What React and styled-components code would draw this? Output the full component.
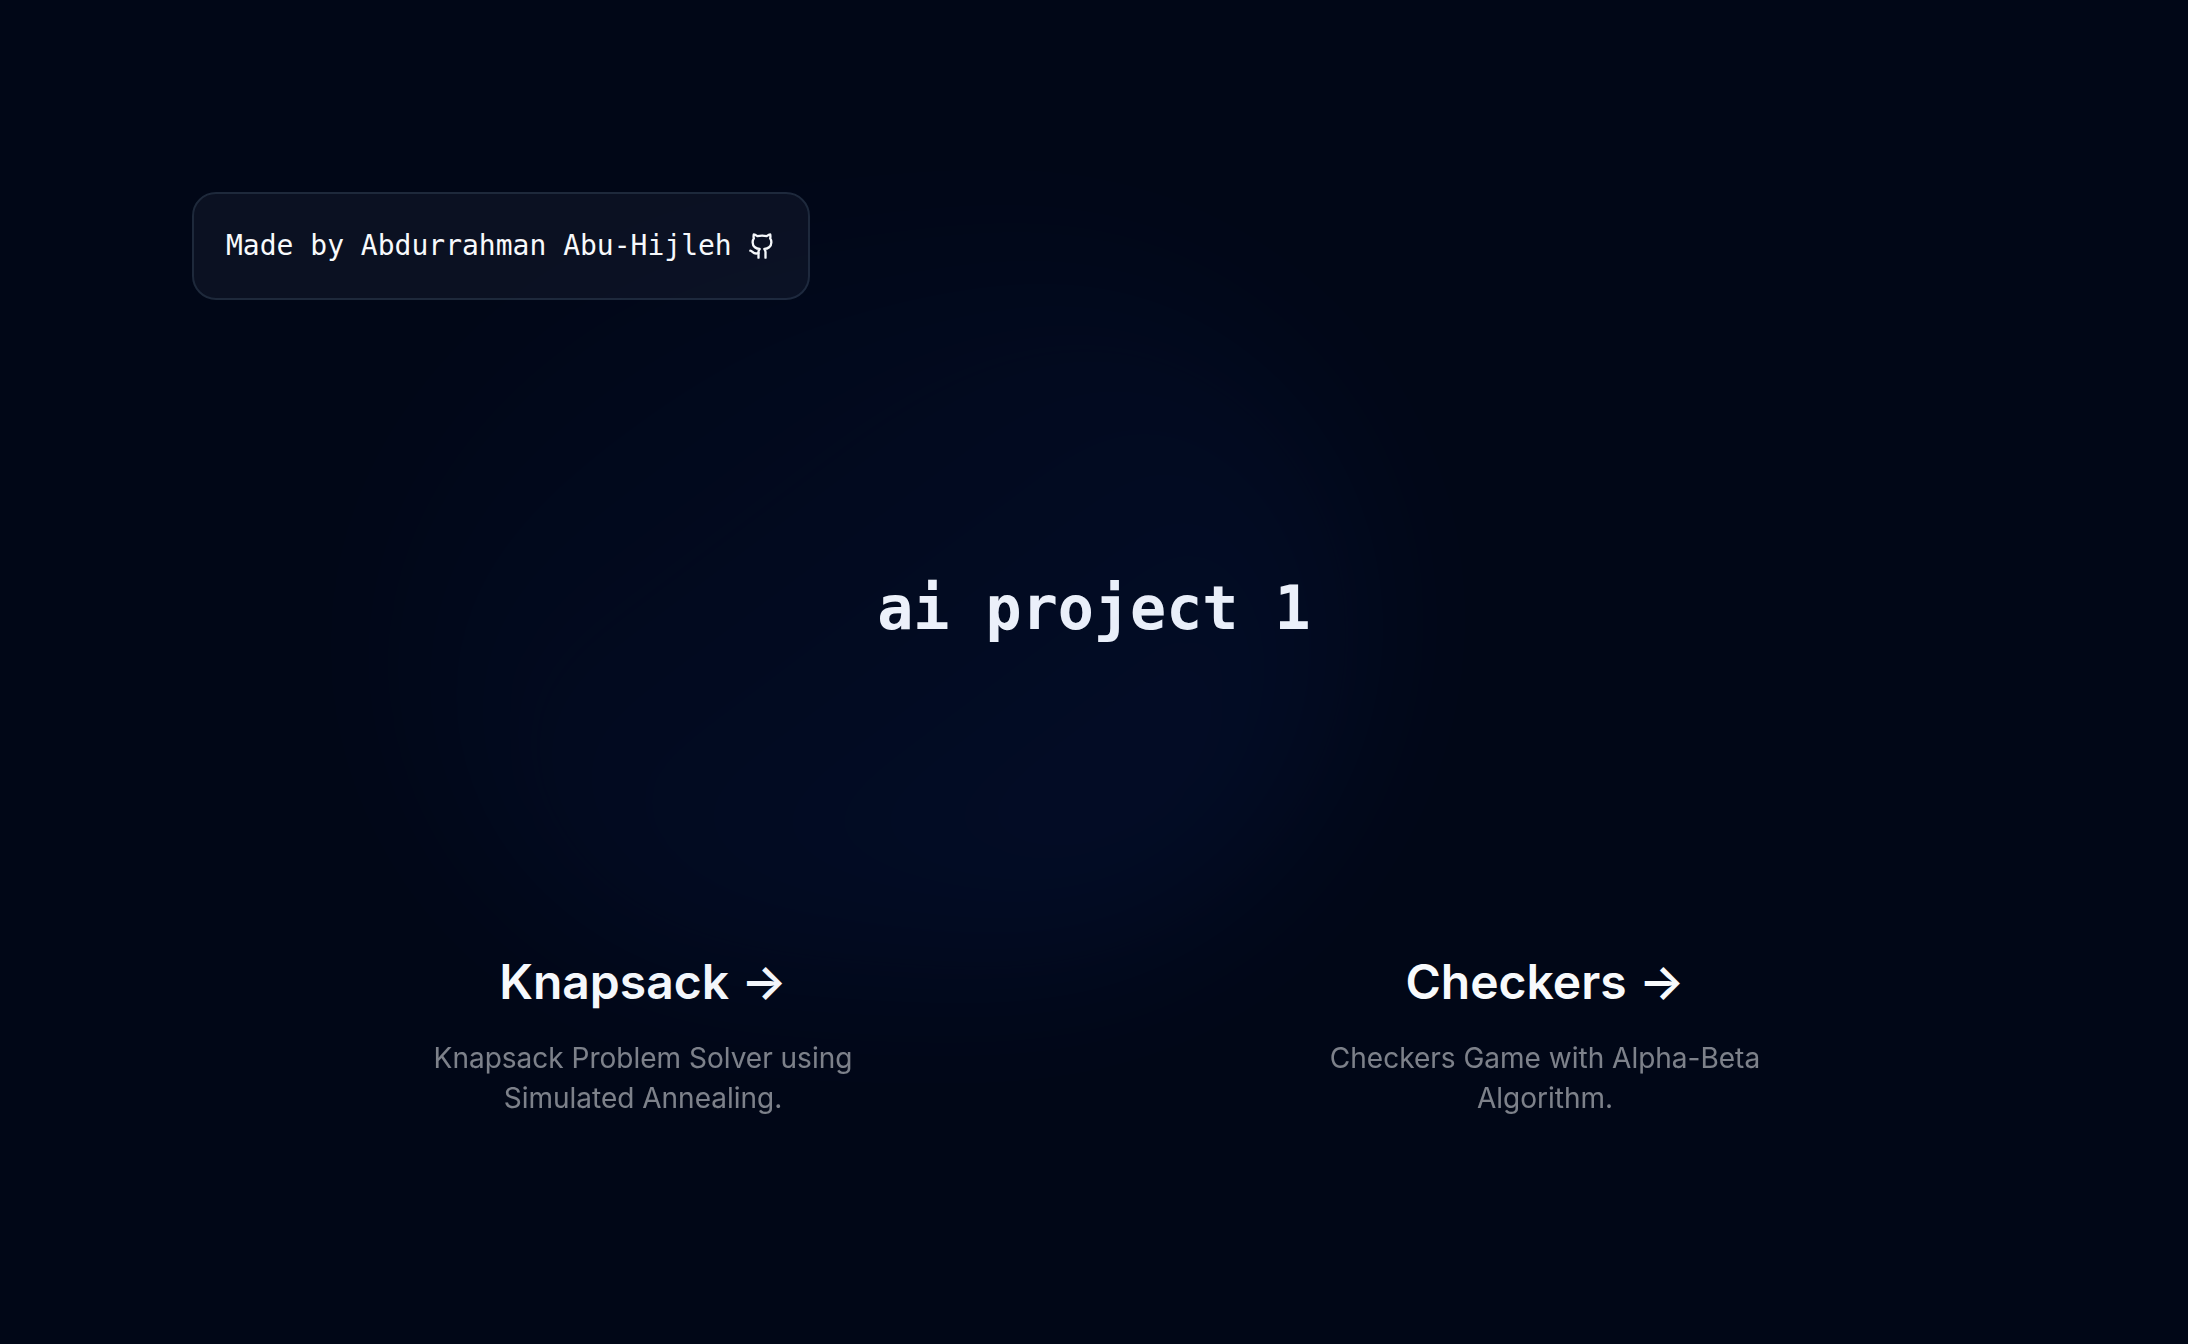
import React from "react";
import styled, { createGlobalStyle } from "styled-components";

const GlobalStyle = createGlobalStyle`
  *, *::before, *::after { box-sizing: border-box; }
  body {
    margin: 0;
    background: #010717;
    color: #f8fafc;
    font-family: Inter, "Liberation Sans", sans-serif;
    -webkit-font-smoothing: antialiased;
  }
  h1, h2, p { margin: 0; }
`;

const Main = styled.main`
  display: flex;
  flex-direction: column;
  align-items: center;
  justify-content: space-between;
  min-height: 100vh;
  padding: 192px;
  overflow: hidden;
`;

const Header = styled.header`
  display: flex;
  width: 100%;
  max-width: 2048px;
`;

const AuthorLink = styled.a`
  display: flex;
  align-items: center;
  gap: 16px;
  padding: 32px;
  border: 2px solid #1e293b;
  border-radius: 24px;
  background: rgb(38 43 60 / 0.3);
  color: inherit;
  font-family: "DejaVu Sans Mono", monospace;
  font-size: 28px;
  line-height: 40px;
  text-decoration: none;
`;

const Icon = styled.svg`
  width: 28px;
  height: 28px;
  fill: none;
  stroke: currentColor;
  stroke-width: 2;
  stroke-linecap: round;
  stroke-linejoin: round;
`;

const Hero = styled.div`
  position: relative;
  display: flex;
  align-items: center;

  &::before {
    content: "";
    position: absolute;
    width: 960px;
    height: 720px;
    border-radius: 9999px;
    background: linear-gradient(to bottom right, transparent, #1d54d8);
    opacity: 0.1;
    filter: blur(80px);
    transform: translateX(-50%);
    pointer-events: none;
  }
`;

const Title = styled.h1`
  font-family: "DejaVu Sans Mono", monospace;
  font-size: 60px;
  font-weight: 700;
  line-height: 60px;
`;

const Projects = styled.nav`
  display: grid;
  grid-template-columns: repeat(2, 1fr);
  width: 100%;
  max-width: 2048px;
  text-align: center;
`;

const ProjectLink = styled.a`
  padding: 32px 40px;
  border: 2px solid transparent;
  border-radius: 16px;
  color: inherit;
  text-decoration: none;
`;

const ProjectName = styled.h2`
  margin-bottom: 24px;
  font-size: 48px;
  font-weight: 600;
  line-height: 64px;
`;

const ProjectText = styled.p`
  max-width: 30ch;
  margin: 0 auto;
  font-size: 28px;
  line-height: 40px;
  opacity: 0.5;
`;

const projects = [
  { name: "Knapsack", text: "Knapsack Problem Solver using Simulated Annealing." },
  { name: "Checkers", text: "Checkers Game with Alpha-Beta Algorithm." },
];

function GithubIcon() {
  return (
    <Icon viewBox="0 0 24 24" aria-hidden="true">
      <path d="M15 22v-4a4.8 4.8 0 0 0-1-3.5c3 0 6-2 6-5.5.08-1.25-.27-2.48-1-3.5.28-1.15.28-2.35 0-3.5 0 0-1 0-3 1.5-2.64-.5-5.36-.5-8 0C6 2 5 2 5 2c-.3 1.15-.3 2.35 0 3.5A5.403 5.403 0 0 0 4 9c0 3.5 3 5.5 6 5.5-.39.49-.68 1.05-.85 1.65-.17.6-.22 1.23-.15 1.85v4" />
      <path d="M9 18c-4.51 2-5-2-7-2" />
    </Icon>
  );
}

export default function App() {
  return (
    <>
      <GlobalStyle />
      <Main>
        <Header>
          <AuthorLink href="#author">
            Made by Abdurrahman Abu-Hijleh
            <GithubIcon />
          </AuthorLink>
        </Header>
        <Hero>
          <Title>ai project 1</Title>
        </Hero>
        <Projects>
          {projects.map(({ name, text }) => (
            <ProjectLink key={name} href={`#${name.toLowerCase()}`}>
              <ProjectName>{name} →</ProjectName>
              <ProjectText>{text}</ProjectText>
            </ProjectLink>
          ))}
        </Projects>
      </Main>
    </>
  );
}
